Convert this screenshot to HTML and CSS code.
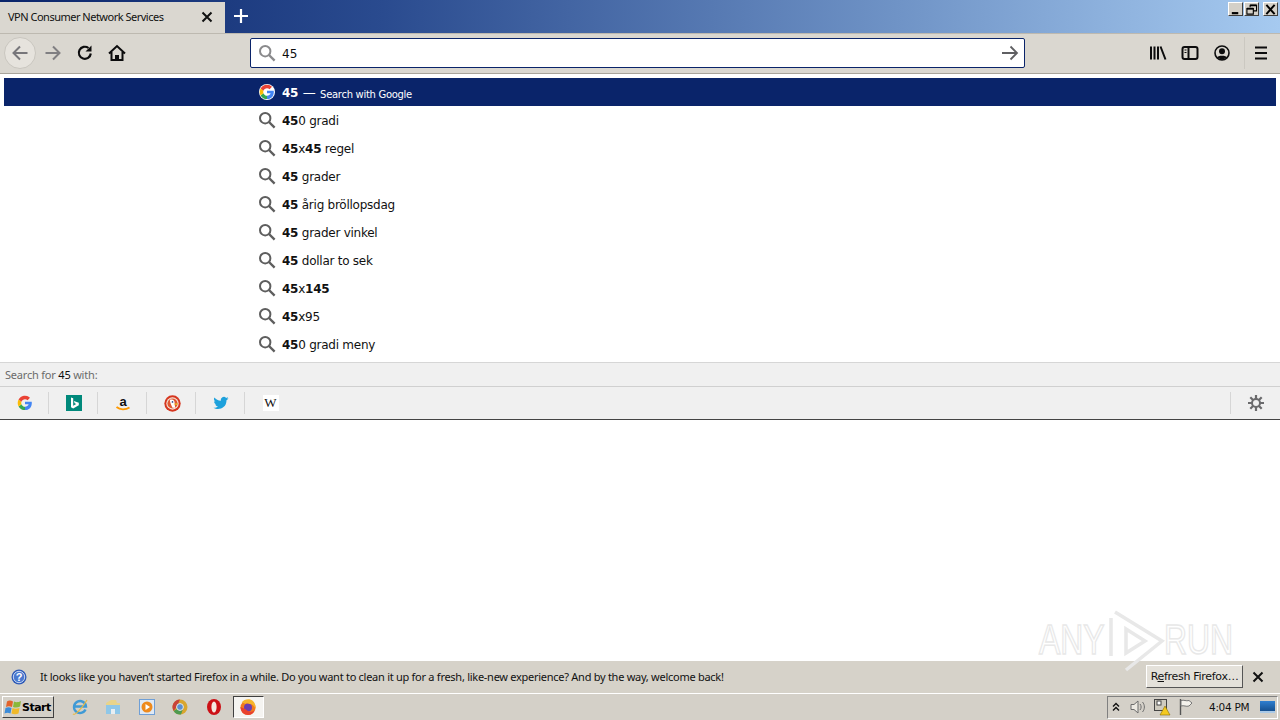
FILE: index.html
```html
<!DOCTYPE html>
<html lang="en">
<head>
<meta charset="utf-8">
<title>VPN Consumer Network Services</title>
<link rel="stylesheet" href="styles.css">
</head>
<body>
<svg class="defs" width="0" height="0" aria-hidden="true">
  <symbol id="mag" viewBox="0 0 18 18"><circle cx="7.2" cy="7.2" r="5.2" fill="none" stroke="currentColor" stroke-width="2"/><path d="M11 11l5.6 5.6" stroke="currentColor" stroke-width="2.4" fill="none"/></symbol>
  <symbol id="goog" viewBox="0 0 18 18"><path d="M16.600 7.500H9v3h4.100c-.5 1.600-2.200 2.800-4.100 2.800V17c4 0 8.300-3 7.600-9.500z" fill="#4285f4"/><path d="M9 13.300c-1.800 0-3.400-1.200-4-2.900L1.800 12.800C3.200 15.300 5.900 17 9 17z" fill="#34a853"/><path d="M5 10.400a4.500 4.500 0 0 1 0-2.800L1.800 5.200a8 8 0 0 0 0 7.600z" fill="#fbbc05"/><path d="M9 4.700c1.100 0 2.100.4 2.900 1.100L14.600 3.200A8 8 0 0 0 1.800 5.200L5 7.600C5.600 5.900 7.200 4.700 9 4.700z" fill="#ea4335"/></symbol>
</svg>
<div class="app">
  <header class="tabbar">
    <div class="tab">
      <span class="tab-title">VPN Consumer Network Services</span>
      <svg class="tab-close" width="12" height="12" viewBox="0 0 12 12"><path d="M1.500 1.500l9 9M10.500 1.500l-9 9" stroke="#111" stroke-width="2"/></svg>
    </div>
    <div class="newtab"><svg width="16" height="16" viewBox="0 0 16 16"><path d="M8 1v14M1 8h14" stroke="#fff" stroke-width="2.200"/></svg></div>
    <div class="strip-space"></div>
    <div class="winctl">
      <span class="winbtn"><svg viewBox="0 0 14 12"><path d="M3 10h7" stroke="#000" stroke-width="2.400"/></svg></span>
      <span class="winbtn"><svg viewBox="0 0 14 12"><path d="M5.500 3.500V1.500h7v6h-3M2 5h7v6H2z" stroke="#000" stroke-width="1.200" fill="none"/><path d="M2 5h7M5.500 1.500h7" stroke="#000" stroke-width="2"/></svg></span>
      <span class="winbtn winbtn-close"><svg viewBox="0 0 14 12"><path d="M2.500 1l9 10M11.500 1l-9 10" stroke="#000" stroke-width="2.200"/></svg></span>
    </div>
  </header>

  <nav class="toolbar">
    <div class="navgroup">
      <span class="backbtn"><svg width="18" height="18" viewBox="0 0 18 18"><path d="M16.500 9H2.500M9 2.500L2.500 9 9 15.500" stroke="#77767a" stroke-width="2" fill="none"/></svg></span>
      <span class="tbtn"><svg width="18" height="18" viewBox="0 0 18 18"><path d="M1.500 9h14M9 2.500L15.500 9 9 15.500" stroke="#807f82" stroke-width="2" fill="none"/></svg></span>
      <span class="tbtn"><svg width="18" height="18" viewBox="0 0 18 18"><path d="M14.800 9.500A6 6 0 1 1 12.500 4" stroke="#0c0c0d" stroke-width="2.200" fill="none"/><path d="M15.500 1.500v6h-6z" fill="#0c0c0d"/></svg></span>
      <span class="tbtn"><svg width="18" height="18" viewBox="0 0 18 18"><path d="M1 9.500L9 2l8 7.500M3.500 8v8h11V8" stroke="#0c0c0d" stroke-width="2" fill="none"/><path d="M7 16v-5h4v5" fill="#0c0c0d"/></svg></span>
    </div>
    <div class="urlbar">
      <svg class="url-mag" width="18" height="18"><use href="#mag"/></svg>
      <span class="url-text">45</span>
      <svg class="url-go" width="18" height="18" viewBox="0 0 18 18"><path d="M1 9h15M9.500 2.500L16 9l-6.500 6.500" stroke="#5f5f62" stroke-width="1.800" fill="none"/></svg>
    </div>
    <div class="rightgroup">
      <span class="tbtn"><svg width="18" height="18" viewBox="0 0 18 18"><path d="M2 2.500v13M5.500 2.500v13M9 2.500v13M11.500 2.500l5 13" stroke="#0c0c0d" stroke-width="2" fill="none"/></svg></span>
      <span class="tbtn"><svg width="18" height="18" viewBox="0 0 18 18"><rect x="1.500" y="3" width="15" height="12" rx="2" fill="none" stroke="#0c0c0d" stroke-width="2"/><path d="M7.500 3v12" stroke="#0c0c0d" stroke-width="2"/><path d="M3.500 6h2M3.500 8.500h2" stroke="#0c0c0d"/></svg></span>
      <span class="tbtn"><svg width="18" height="18" viewBox="0 0 18 18"><circle cx="9" cy="9" r="7" fill="none" stroke="#0c0c0d" stroke-width="1.600"/><circle cx="9" cy="7.200" r="3" fill="#0c0c0d"/><path d="M3.800 13.500c1-2.500 9.400-2.500 10.400 0L9 16z" fill="#0c0c0d"/></svg></span>
      <span class="sep"></span>
      <span class="tbtn"><svg width="18" height="18" viewBox="0 0 18 18"><path d="M3 3.500h12M3 9h12M3 14.500h12" stroke="#0c0c0d" stroke-width="2"/></svg></span>
    </div>
  </nav>

  <section class="results">
    <div class="row row-active"><svg class="row-icon goog-icon" width="16" height="16"><use href="#goog"/></svg><span class="row-text"><b>45</b> <span class="dash">—</span> <span class="hint">Search with Google</span></span></div>
    <div class="row"><svg class="row-icon" width="18" height="18"><use href="#mag"/></svg><span class="row-text"><b>45</b>0 gradi</span></div>
    <div class="row"><svg class="row-icon" width="18" height="18"><use href="#mag"/></svg><span class="row-text"><b>45</b>x<b>45</b> regel</span></div>
    <div class="row"><svg class="row-icon" width="18" height="18"><use href="#mag"/></svg><span class="row-text"><b>45</b> grader</span></div>
    <div class="row"><svg class="row-icon" width="18" height="18"><use href="#mag"/></svg><span class="row-text"><b>45</b> årig bröllopsdag</span></div>
    <div class="row"><svg class="row-icon" width="18" height="18"><use href="#mag"/></svg><span class="row-text"><b>45</b> grader vinkel</span></div>
    <div class="row"><svg class="row-icon" width="18" height="18"><use href="#mag"/></svg><span class="row-text"><b>45</b> dollar to sek</span></div>
    <div class="row"><svg class="row-icon" width="18" height="18"><use href="#mag"/></svg><span class="row-text"><b>45</b>x<b>145</b></span></div>
    <div class="row"><svg class="row-icon" width="18" height="18"><use href="#mag"/></svg><span class="row-text"><b>45</b>x95</span></div>
    <div class="row"><svg class="row-icon" width="18" height="18"><use href="#mag"/></svg><span class="row-text"><b>45</b>0 gradi meny</span></div>
  </section>

  <section class="oneoff">
    <div class="oneoff-head">Search for <span class="query">45</span> with:</div>
    <div class="oneoff-icons">
      <span class="engine"><svg width="16" height="16"><use href="#goog"/></svg></span>
      <span class="engine"><svg width="16" height="16" viewBox="0 0 16 16"><rect width="16" height="16" fill="#00897b"/><path d="M5 2.500l2.200.8v7.400l3-1.700-1.500-.7-.9-2.300 5 1.800v2.500L7.200 13.500 5 12.300z" fill="#fff"/></svg></span>
      <span class="engine"><svg width="16" height="20" viewBox="0 0 16 20"><text class="amz" x="8" y="12.500" text-anchor="middle">a</text><path d="M1.500 14c3.500 3 9 3 13 .5" stroke="#f90" stroke-width="1.800" fill="none"/></svg></span>
      <span class="engine"><svg width="17" height="17" viewBox="0 0 16 16"><circle cx="8" cy="8" r="7.700" fill="#d5361f"/><circle cx="8" cy="8" r="5.800" fill="#f6e8dc"/><circle cx="8" cy="8" r="4.800" fill="#de5833"/><path d="M5.500 4.500c3-1 4.500.5 4.500 3 0 2 .5 3.500.5 4.500H8C7 10 5.500 7 5.500 4.500z" fill="#fff"/><path d="M8.500 8.500l4-.8v1.800z" fill="#e8c91f"/><circle cx="8" cy="6.500" r=".8" fill="#2d4f8e"/></svg></span>
      <span class="engine"><svg width="16" height="16" viewBox="0 0 16 16"><path d="M15.500 3.300c-.6.300-1.200.4-1.800.5.700-.4 1.100-1 1.400-1.700-.6.400-1.300.6-2 .8a3.100 3.100 0 0 0-5.300 2.800C5.200 5.600 2.900 4.400 1.400 2.500c-.8 1.400-.4 3.200 1 4.100-.5 0-1-.2-1.400-.4 0 1.500 1 2.800 2.500 3.100-.5.100-.9.100-1.400 0 .4 1.200 1.500 2.100 2.900 2.100-1.300 1-2.900 1.500-4.500 1.300 4.500 2.800 13 .9 13-7.500.7-.4 1.400-1 2-1.900z" fill="#1da1dc"/></svg></span>
      <span class="engine engine-last"><span class="wiki">W</span></span>
      <span class="engine-space"></span>
      <span class="gear"><svg width="18" height="18" viewBox="0 0 18 18"><g stroke="#6a6a6c" stroke-width="2.200"><path d="M9 1v16M1 9h16M3.300 3.300l11.400 11.400M14.700 3.300L3.300 14.700"/></g><circle cx="9" cy="9" r="5" fill="#6a6a6c"/><circle cx="9" cy="9" r="3" fill="#f0f0f0"/></svg></span>
    </div>
  </section>

  <main class="page"></main>

  <section class="notice">
    <svg class="notice-icon" width="16" height="16" viewBox="0 0 16 16"><circle cx="8" cy="8" r="7.500" fill="#2f5bb7"/><circle cx="8" cy="8" r="5.700" fill="#4a78cf" stroke="#c6d6f2"/><text class="qmark" x="8" y="11.500" text-anchor="middle">?</text></svg>
    <span class="notice-text">It looks like you haven’t started Firefox in a while. Do you want to clean it up for a fresh, like-new experience? And by the way, welcome back!</span>
    <button class="refresh" type="button">R<u>e</u>fresh Firefox…</button>
    <svg class="notice-close" width="12" height="12" viewBox="0 0 12 12"><path d="M1.500 1.500l9 9M10.500 1.500l-9 9" stroke="#111" stroke-width="2"/></svg>
  </section>

  <footer class="taskbar">
    <button class="start" type="button"><svg width="18" height="17" viewBox="0 0 18 16"><path d="M3 2c2-1.500 4-1 6 0L8 7.500C6 6.500 4 6.300 2 7.500z" fill="#e2622b"/><path d="M10 2c2 1 4 1 7-.5L16 7c-2 1-4 1.500-7 .5z" fill="#8ab83a"/><path d="M1.500 8.500c2-1 4-1 6 0L6.500 14c-2-1-4-1-6 0z" fill="#3b8bd8"/><path d="M8.500 8.500c2 1 4 1 7 0l-1 5.500c-2 1-5 1-7 0z" fill="#f0b92a"/></svg><span>Start</span></button>
    <div class="quick">
      <span class="qi"><svg width="18" height="18" viewBox="0 0 18 18"><path d="M14.500 11.500A6 6 0 1 1 15 8.500H3.500" fill="none" stroke="#3f9ad6" stroke-width="2.400"/><path d="M2 16c1.500 1.500 8-4 14-14" stroke="#e8b93e" stroke-width="1.200" fill="none"/></svg></span>
      <span class="qi"><svg width="18" height="18" viewBox="0 0 18 18"><path d="M2 5l5-3h5l1 3h3v11H2z" fill="#e9d48a"/><path d="M2 7h14v9H2z" fill="#8fc7e8"/><path d="M7 11h4v5H7z" fill="#e8eef2"/></svg></span>
      <span class="qi"><svg width="18" height="18" viewBox="0 0 18 18"><rect x="1.500" y="1.500" width="15" height="15" fill="#dfe9f5" stroke="#6f9fd6"/><circle cx="9" cy="9" r="5.500" fill="#ee8a1d"/><path d="M7.500 6v6L12 9z" fill="#fff"/></svg></span>
      <span class="qi"><svg width="18" height="18" viewBox="0 0 18 18"><circle cx="9" cy="9" r="7.500" fill="#d9a62f"/><path d="M9 1.500a7.500 7.500 0 0 0-6.400 11.400L6 8.500z" fill="#c8423a"/><path d="M2.600 12.900A7.500 7.500 0 0 0 10 16.400L12 11H6z" fill="#4f9a4f"/><circle cx="9" cy="9" r="3.400" fill="#5a8fd0" stroke="#e8e8e8"/></svg></span>
      <span class="qi"><svg width="18" height="18" viewBox="0 0 18 18"><ellipse cx="9" cy="9" rx="7" ry="8" fill="#cc1016"/><ellipse cx="9" cy="9" rx="2.600" ry="5.600" fill="#f4e8e0"/></svg></span>
      <span class="qi qi-active"><svg width="18" height="18" viewBox="0 0 18 18"><circle cx="9" cy="9.500" r="7.500" fill="#f27a1e"/><circle cx="9" cy="9.500" r="4" fill="#6a3fb0"/><path d="M3 4c2-3 8-4 11-1 2 2 3 5 2.500 8-1-3-3-5-6-5-1-1-4-1-4 0-1-.5-2.500-1-3.500-2z" fill="#f6b52b"/><path d="M1.500 9c0 5 3.500 8 7.500 8 3 0 6-2 7-5-2 2-5 2-7 1-2-1-2-2-3-2z" fill="#e9422e"/></svg></span>
    </div>
    <div class="task-space"></div>
    <div class="tray">
      <svg class="tray-up" width="8" height="10" viewBox="0 0 8 10"><path d="M1 4.500L4 1.500l3 3M1 8.500l3-3 3 3" stroke="#111" stroke-width="1.400" fill="none"/></svg>
      <svg class="tray-sound" width="18" height="16" viewBox="0 0 18 16"><path d="M2 5.500h3l4-3.500v12l-4-3.500H2z" fill="#ece9e2" stroke="#6d6d6d"/><path d="M11 5c1.500 2 1.500 4 0 6M13.500 3c2.500 3 2.500 7 0 10" stroke="#6d6d6d" fill="none"/></svg>
      <svg class="tray-net" width="18" height="18" viewBox="0 0 18 18"><rect x="1.500" y="1.500" width="12" height="11" fill="#cfcbbf" stroke="#444"/><rect x="4" y="3" width="4" height="4" fill="#fff" stroke="#444"/><path d="M12 8l5 9H7z" fill="#f4c91f" stroke="#8a6d00" stroke-width=".6"/></svg>
      <svg class="tray-flag" width="18" height="18" viewBox="0 0 18 18"><path d="M3.500 1v16" stroke="#555" stroke-width="1.400"/><path d="M4 2.500c3-1 5 1 8 0l3 2.500-3 3c-3 1-5-1-8 0z" fill="#f4f2ec" stroke="#777"/></svg>
      <span class="clock">4:04 PM</span>
      <span class="show-desktop"></span>
    </div>
  </footer>

  <div class="watermark" aria-hidden="true">
    <span class="wm-text">ANY</span>
    <svg class="wm-mark" width="60" height="64" viewBox="0 0 60 64"><path d="M5 10v38M9 4l47 29-36 29M20 21l19 12-19 12z" stroke="#e8e8e8" stroke-width="3.500" fill="none"/></svg>
    <span class="wm-text wm-run">RUN</span>
  </div>
</div>
</body>
</html>
```
FILE: styles.css
```css
* { box-sizing: border-box; }
html, body { margin: 0; padding: 0; height: 100%; }
body { font-family: "DejaVu Sans", Tahoma, sans-serif; font-size: 11px; color: #0c0c0d; overflow: hidden; background: #fff; }
.defs { position: absolute; }
.app { position: relative; width: 1280px; height: 720px; display: flex; flex-direction: column; }

.tabbar { height: 33px; flex: none; display: flex; background: linear-gradient(90deg, #0a246a 0%, #2a4b8f 30%, #6f93c6 70%, #a6caf0 100%); }
.tab { width: 225px; height: 31px; margin-top: 2px; padding: 0 12px 3px 8px; background: #dad7d0; display: flex; align-items: center; justify-content: space-between; }
.tab-title { font-family: "Noto Sans", sans-serif; font-size: 11px; letter-spacing: -.5px; white-space: nowrap; color: #111; }
.tab-close { position: relative; top: 1px; }
.newtab { width: 32px; padding-bottom: 2px; display: flex; align-items: center; justify-content: center; }
.strip-space { flex: 1; }
.winctl { display: flex; gap: 1px; padding: 2px 2px 0 0; align-self: flex-start; }
.winbtn { width: 15px; height: 14px; background: #d4d0c8; border: 1px solid; border-color: #fff #404040 #404040 #fff; display: flex; align-items: center; justify-content: center; }
.winbtn-close { margin-left: 3px; }
.winbtn svg { width: 13px; height: 11px; }

.toolbar { height: 41px; flex: none; display: flex; align-items: center; padding-bottom: 1px; background: #dad7d0; border-bottom: 1px solid #a8a49b; border-top: 1px solid #bdb9b0; }
.navgroup { width: 250px; display: flex; align-items: center; padding-left: 4px; flex: none; }
.backbtn { width: 32px; height: 32px; margin-right: 1px; border-radius: 50%; border: 1px solid #c9c6bf; background: #e6e3dd; display: flex; align-items: center; justify-content: center; }
.tbtn { width: 32px; height: 32px; display: flex; align-items: center; justify-content: center; flex: none; }
.urlbar { width: 775px; height: 30px; flex: none; background: #fff; border: 1px solid #0a246a; border-radius: 2px; display: flex; align-items: center; padding: 0 5px 0 7px; }
.url-mag { color: #8a8a8c; }
.url-text { margin-left: 6px; padding-top: 2px; font-size: 12px; flex: 1; }
.rightgroup { flex: 1; display: flex; align-items: center; justify-content: flex-end; padding-right: 3px; }
.sep { width: 1px; height: 32px; background: #cbc8c1; margin-left: 6px; }

.results { height: 288px; flex: none; padding: 4px 4px 0; background: #fff; }
.row { height: 28px; display: flex; align-items: center; padding-left: 254px; color: #111; }
.row-icon { color: #5e5e5e; flex: none; margin-right: 6px; }
.goog-icon { margin: 0 7px 0 1px; background: #fff; border-radius: 50%; }
.row-text { padding-top: 2px; font-size: 12px; white-space: nowrap; letter-spacing: -.25px; }
.row-active { background: #0a246a; color: #fff; }
.row-active .row-text { padding-top: 0; }
.dash { margin: 0 1px; font-size: 13px; }
.hint { font-size: 10px; letter-spacing: -.3px; position: relative; top: 1px; }

.oneoff { flex: none; background: #f0f0f0; border-top: 1px solid #d6d6d6; border-bottom: 1px solid #444; }
.oneoff-head { height: 24px; line-height: 24px; padding-left: 5px; font-family: "Noto Sans", sans-serif; color: #6b6b6b; font-size: 11px; letter-spacing: -.2px; border-bottom: 1px solid #d0d0d0; white-space: nowrap; }
.query { color: #0c0c0d; }
.oneoff-icons { height: 32px; display: flex; align-items: center; }
.engine { width: 49px; height: 22px; padding-left: 2px; display: flex; align-items: center; justify-content: center; border-right: 1px solid #d6d6d6; flex: none; }
.engine-last { border-right: 0; }
.amz { font: bold 13px "Liberation Sans", sans-serif; fill: #111; }
.wiki { width: 16px; height: 16px; background: #fff; font: 13px/16px "Liberation Serif", serif; text-align: center; color: #111; }
.engine-space { flex: 1; }
.gear { width: 50px; height: 22px; border-left: 1px solid #d6d6d6; display: flex; align-items: center; justify-content: center; }

.page { flex: 1; background: #fff; }

.notice { height: 32px; flex: none; display: flex; align-items: center; background: #d6d2c9; padding: 0 16px 1px 11px; }
.notice-text { flex: 1; margin-left: 13px; font-family: "Noto Sans", sans-serif; font-size: 11px; letter-spacing: -.27px; white-space: nowrap; color: #111; }
.notice-icon { flex: none; }
.qmark { font: bold 11px "Liberation Sans", sans-serif; fill: #fff; }
.refresh { width: 97px; height: 23px; padding: 0; background: #e4e1da; border: 1px solid; border-color: #fff #555 #555 #fff; font: 11px "DejaVu Sans", sans-serif; letter-spacing: -.3px; color: #111; margin-right: 9px; }

.taskbar { height: 27px; flex: none; display: flex; align-items: center; background: #d4d0c8; border-top: 1px solid #fff; }
.start { width: 52px; height: 22px; margin-left: 2px; padding: 0 0 0 1px; display: flex; align-items: center; gap: 0; background: #d4d0c8; border: 1px solid; border-color: #fff #404040 #404040 #fff; font: bold 11px "DejaVu Sans", sans-serif; letter-spacing: -.5px; color: #000; }
.quick { display: flex; align-items: center; margin-left: 9px; }
.qi { width: 33.500px; height: 22px; display: flex; align-items: center; justify-content: center; }
.qi-active { width: 31px; margin-left: 2px; background: #f5f4f1; border: 1px solid; border-color: #404040 #fff #fff #404040; }
.task-space { flex: 1; }
.tray { height: 23px; width: 171px; margin-right: 2px; padding-left: 4px; display: flex; align-items: center; border: 1px solid; border-color: #808080 #fff #fff #808080; }
.tray-up { flex: none; }
.tray-sound { margin-left: 9px; flex: none; }
.tray-net { margin-left: 6px; flex: none; }
.tray-flag { margin-left: 6px; flex: none; }
.clock { font-size: 10.500px; margin-left: 14px; letter-spacing: -.3px; color: #111; white-space: nowrap; }
.show-desktop { width: 15px; height: 12px; background: linear-gradient(#2f7fd0, #16508f); border-bottom: 2px solid #aac9e6; margin-left: 11px; }

.watermark { position: absolute; left: 1039px; top: 608px; display: flex; align-items: center; font: 42px "Liberation Sans", sans-serif; color: transparent; -webkit-text-stroke: 1.500px #e8e8e8; pointer-events: none; }
.wm-text { width: 66px; display: block; transform: scaleX(.76); transform-origin: left center; white-space: nowrap; }
.wm-mark { margin-left: 1px; flex: none; }
.wm-run { margin-left: -2px; }
```
